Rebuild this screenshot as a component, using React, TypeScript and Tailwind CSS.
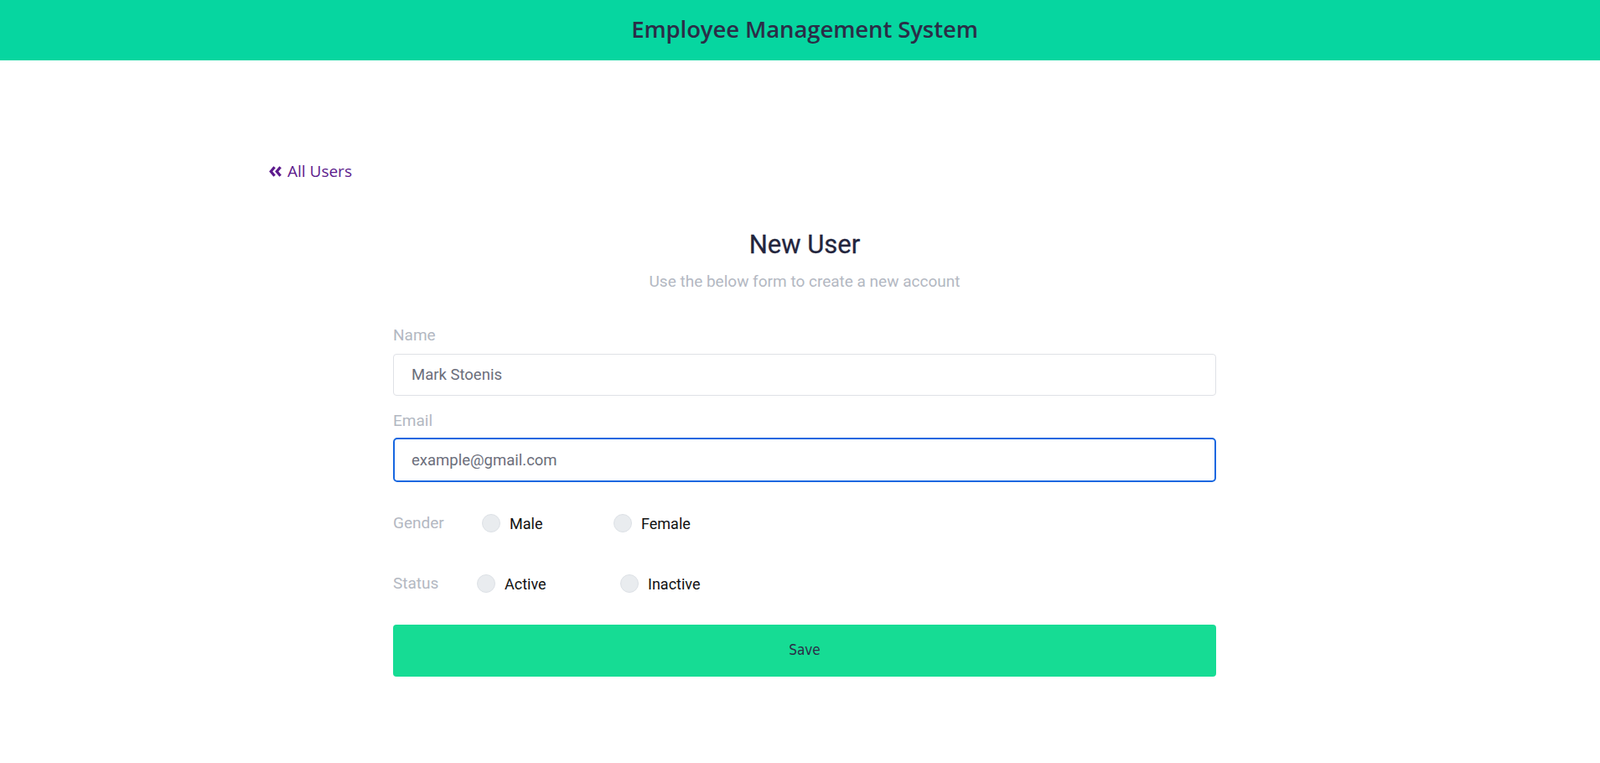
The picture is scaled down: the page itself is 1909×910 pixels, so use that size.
import React from 'react';

const Radio = ({ label, className }: { label: string; className?: string }) => {
    return (
        <label className={`flex items-center ${className ?? ''}`}>
            <span className="block h-[22px] w-[22px] shrink-0 rounded-full border border-[#dde1e6] bg-[#e9ecef]" />
            <span className="ml-[11px] text-[18px] text-[#111]">{label}</span>
        </label>
    );
};

const App = () => {
    return (
        <div className="min-h-screen bg-white font-['Roboto',sans-serif]">
            <header className="flex h-[72px] items-center justify-center bg-[#06d6a0] pl-[11px]">
                <h1 className="pb-[2px] font-['Open_Sans',sans-serif] text-[27.5px] font-semibold tracking-[-0.1px] text-[#2b2d47]">
                    Employee Management System
                </h1>
            </header>

            <div className="px-[321px] pt-[120px]">
                <a href="#" className="flex items-center gap-[6px] font-['Open_Sans',sans-serif] text-[19px] leading-[24px] text-[#5c1a8c]">
                    <svg width="16" height="13" viewBox="0 0 16 13" fill="none" stroke="currentColor" strokeWidth="3.2" strokeLinejoin="miter">
                        <path d="M6.6 1.2L2.2 6.5L6.6 11.8" />
                        <path d="M13.6 1.2L9.2 6.5L13.6 11.8" />
                    </svg>
                    <span>All Users</span>
                </a>
            </div>

            <div className="ml-[469px] w-[982px] pt-[58px]">
                <h2 className="text-center text-[31px] leading-[36px] text-[#23253d] [-webkit-text-stroke:0.3px_#23253d]">New User</h2>
                <p className="mt-[14px] text-center text-[19px] leading-[24px] text-[#b3b8c2]">
                    Use the below form to create a new account
                </p>

                <div className="mt-[40px]">
                    <div className="text-[19px] leading-[24px] text-[#b3b8c2]">Name</div>
                    <input
                        className="mt-[10px] block h-[50px] w-full rounded-[4px] border border-[#dfe1e6] px-[21px] text-[18.5px] text-[#6b6e7b] outline-none"
                        defaultValue="Mark Stoenis"
                    />
                </div>

                <div className="mt-[18px]">
                    <div className="text-[19px] leading-[24px] text-[#b3b8c2]">Email</div>
                    <input
                        className="mt-[8px] block h-[53px] w-full rounded-[5px] border-2 border-[#1767e0] px-[20px] text-[18.5px] text-[#6b6e7b] outline-none placeholder:text-[#6b6e7b]"
                        placeholder="example@gmail.com"
                    />
                </div>

                <div className="mt-[37px] flex h-[24px] items-center">
                    <span className="w-[106px] text-[19px] text-[#b3b8c2]">Gender</span>
                    <Radio label="Male" className="w-[157px]" />
                    <Radio label="Female" />
                </div>

                <div className="mt-[48px] flex h-[24px] items-center">
                    <span className="w-[100px] text-[19px] text-[#b3b8c2]">Status</span>
                    <Radio label="Active" className="w-[171px]" />
                    <Radio label="Inactive" />
                </div>

                <button className="mt-[37px] block h-[62px] w-full rounded-[4px] bg-[#16dc94] font-['DejaVu_Sans_Condensed','DejaVu_Sans',sans-serif] text-[17px] text-[#2b2d47]">
                    Save
                </button>
            </div>
        </div>
    );
};

export default App;
